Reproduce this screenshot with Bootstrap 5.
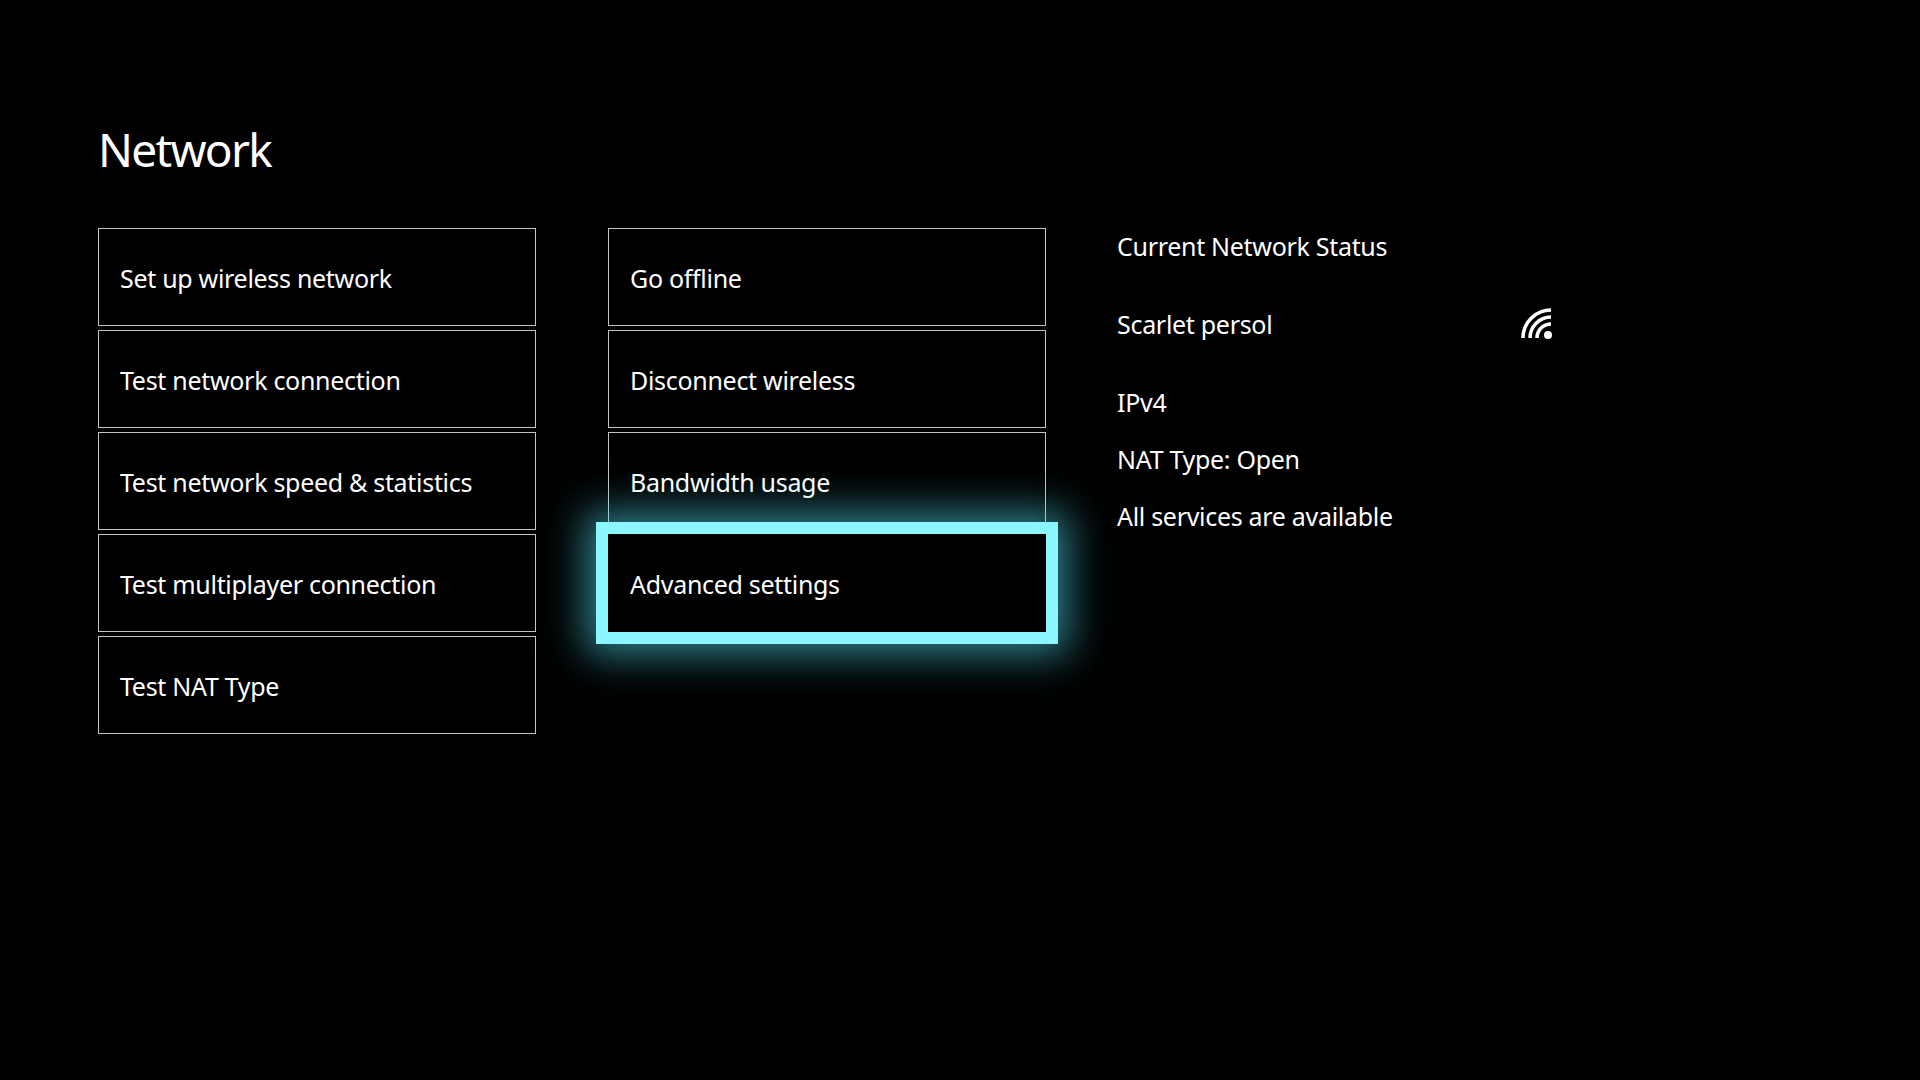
<!DOCTYPE html>
<html lang="en"><head><meta charset="utf-8"><title>Network</title>
<link href="https://cdn.jsdelivr.net/npm/bootstrap@5.3.0/dist/css/bootstrap.min.css" rel="stylesheet">
<style>
html,body{height:100%;background:#000;color:#fff;font-family:"Noto Sans","Open Sans",sans-serif;overflow:hidden}
.screen{padding:0 0 0 98px;height:1080px}
.screen-title{font-size:46px;font-weight:400;line-height:60px;margin:0;padding-top:119px;height:228px;letter-spacing:-1.7px}
.tile-col{width:438px;gap:4px}
.tile{height:98px;border:1.5px solid #c4c4c4;background:#000;color:#fff;display:flex;align-items:center;padding:4px 20px 0 21px;font-size:25px;letter-spacing:-.3px;text-align:left;border-radius:0}
.tile-focus{position:relative;z-index:2;border:0;padding:4px 22px 0;box-shadow:0 0 0 12px #8cf6ff,0 0 38px 22px rgba(80,220,238,.6)}
.status{margin-left:71px;width:437px;font-size:25px;line-height:34px;letter-spacing:-.3px;padding-top:1px}
.status-row{height:34px;margin:0}
.status-line{margin-top:44px}
.status-ip{margin-top:44px}
.status-gap{margin-top:23px}
.col-shift{margin-left:72px}
.wifi-glyph{flex:none}
</style></head>
<body>
<main class="screen">
<h1 class="screen-title">Network</h1>
<div class="d-flex">
<div class="tile-col d-flex flex-column">
<div class="tile">Set up wireless network</div>
<div class="tile">Test network connection</div>
<div class="tile">Test network speed &amp; statistics</div>
<div class="tile">Test multiplayer connection</div>
<div class="tile">Test NAT Type</div>
</div>
<div class="tile-col d-flex flex-column col-shift">
<div class="tile">Go offline</div>
<div class="tile">Disconnect wireless</div>
<div class="tile">Bandwidth usage</div>
<div class="tile tile-focus">Advanced settings</div>
</div>
<div class="status">
<p class="status-row">Current Network Status</p>
<div class="status-row d-flex justify-content-between align-items-center status-line"><span>Scarlet persol</span>
<svg class="wifi-glyph" width="34" height="34" viewBox="0 0 34 34" fill="none" stroke="#fff" stroke-width="3.5" aria-hidden="true"><path d="M3 31A28 28 0 0 1 31 3"/><path d="M10 31A21 21 0 0 1 31 10"/><path d="M17 31A14 14 0 0 1 31 17"/><circle cx="28" cy="28" r="4" fill="#fff" stroke="none"/></svg></div>
<p class="status-row status-ip">IPv4</p>
<p class="status-row status-gap">NAT Type: Open</p>
<p class="status-row status-gap">All services are available</p>
</div>
</div>
</main>
<script src="https://cdn.jsdelivr.net/npm/bootstrap@5.3.0/dist/js/bootstrap.bundle.min.js"></script>
</body></html>
